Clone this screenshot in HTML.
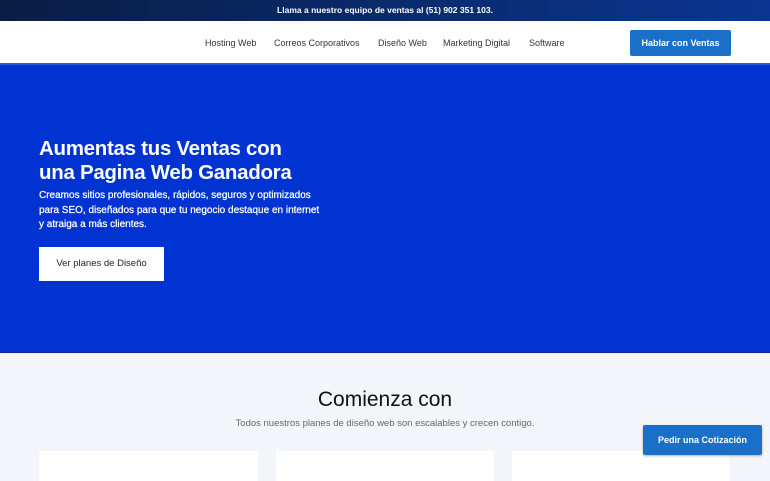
<!DOCTYPE html>
<html><head><meta charset="utf-8"><style>
*{margin:0;padding:0;box-sizing:border-box}
body{width:770px;height:470px;overflow:hidden;font-family:"Liberation Sans",sans-serif;background:#f2f5f9;position:relative}
.top{position:absolute;top:0;left:0;width:770px;height:21px;background:linear-gradient(90deg,#0a1d45,#0a2a6a 50%,#0a3592);color:#fff;font-size:8.5px;font-weight:bold;text-align:center;line-height:21px}
.nav{position:absolute;top:21px;left:0;width:770px;height:44px;background:#fff;border-bottom:2px solid #2a55e0}
.nav a{position:absolute;top:17px;font-size:9px;color:#333;text-decoration:none}
.btn{position:absolute;left:630px;top:9px;width:101px;height:26px;background:#1a6fc8;color:#fff;font-size:9px;font-weight:bold;text-align:center;line-height:26px;border-radius:2px}
.hero{position:absolute;top:65px;left:0;width:770px;height:288px;background:#0033d1;border-bottom:1px solid #0f2a9a}
h1{position:absolute;left:39px;top:72px;color:#fff;font-size:20.5px;font-weight:bold;line-height:24px;letter-spacing:-0.3px}
.hero p{position:absolute;left:39px;top:124px;width:285px;color:#fff;font-size:10px;line-height:14.5px;-webkit-text-stroke:0.25px #fff}
.cta{position:absolute;left:39px;top:182px;width:125px;height:34px;background:#fff;color:#222;font-size:9.5px;text-align:center;line-height:34px}
h2{position:absolute;top:388px;width:770px;text-align:center;font-size:21px;font-weight:normal;color:#111}
.sub{position:absolute;top:418px;width:770px;text-align:center;font-size:9.5px;color:#666}
.card{position:absolute;top:451px;width:220px;height:30px;background:#fff}
.float{position:absolute;left:643px;top:425px;width:119px;height:30px;background:#1a6fc8;color:#fff;font-size:9px;font-weight:bold;text-align:center;line-height:30px;border-radius:2px;box-shadow:0 1px 2px rgba(0,0,0,.3)}
</style></head><body>
<div class="top">Llama a nuestro equipo de ventas al (51) 902 351 103.</div>
<div class="nav">
<a style="left:205px">Hosting Web</a>
<a style="left:274px">Correos Corporativos</a>
<a style="left:378px">Diseño Web</a>
<a style="left:443px">Marketing Digital</a>
<a style="left:529px">Software</a>
<div class="btn">Hablar con Ventas</div>
</div>
<div class="hero">
<h1>Aumentas tus Ventas con<br>una Pagina Web Ganadora</h1>
<p>Creamos sitios profesionales, rápidos, seguros y optimizados para SEO, diseñados para que tu negocio destaque en internet y atraiga a más clientes.</p>
<div class="cta">Ver planes de Diseño</div>
</div>
<h2>Comienza con</h2>
<div class="sub">Todos nuestros planes de diseño web son escalables y crecen contigo.</div>
<div class="card" style="left:39px;width:219px"></div>
<div class="card" style="left:276px;width:218px"></div>
<div class="card" style="left:512px;width:218px"></div>
<div class="float">Pedir una Cotización</div>
</body></html>
